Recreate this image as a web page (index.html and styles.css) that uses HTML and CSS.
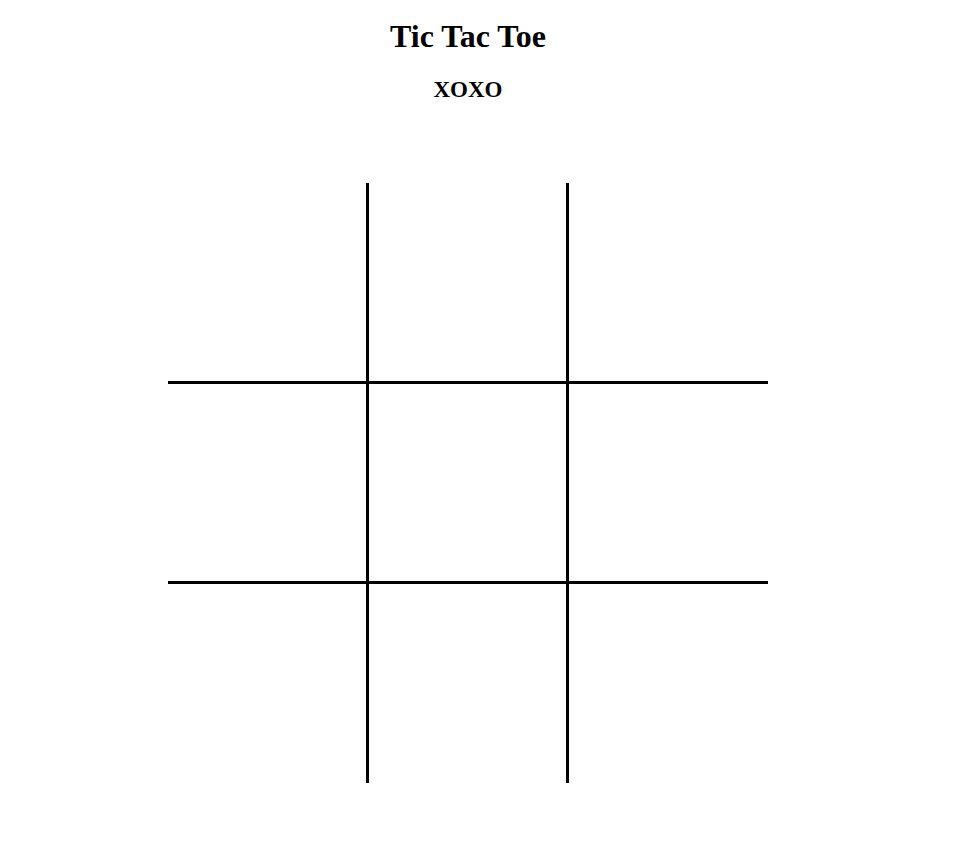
FILE: index.html
```html
<!DOCTYPE html>
<html lang="en">
<head>
  <meta charset="UTF-8">
  <meta name="viewport" content="width=device-width, initial-scale=1.0">
  <title>Tic Tac Toe</title>
  <link rel="stylesheet" href="styles.css">
</head>
<body>
  <div class="app">
    <h1>Tic Tac Toe</h1>
    <h2>XOXO</h2>
    <div class="board">
      <div class="cell c0"></div>
      <div class="cell c1"></div>
      <div class="cell c2"></div>
      <div class="cell c3"></div>
      <div class="cell c4"></div>
      <div class="cell c5"></div>
      <div class="cell c6"></div>
      <div class="cell c7"></div>
      <div class="cell c8"></div>
    </div>
  </div>
</body>
</html>
```

FILE: styles.css
```css
body {
  margin: 0;
  font-family: "Liberation Serif", "Times New Roman", serif;
  color: #000;
  background: #fff;
}
.app {
  width: 936px;
  text-align: center;
}
h1 {
  font-size: 32px;
  margin: 18px 0 0;
}
h2 {
  font-size: 23px;
  margin: 22px 0 0;
}
.board {
  display: grid;
  grid-template-columns: 201px 200px 199px;
  grid-template-rows: 201px 200px 199px;
  width: 600px;
  margin: 80px auto 0;
}
.cell {
  box-sizing: border-box;
}
.c0, .c1, .c3, .c4, .c6, .c7 {
  border-right: 3px solid #000;
}
.c0, .c1, .c2, .c3, .c4, .c5 {
  border-bottom: 3px solid #000;
}
```
